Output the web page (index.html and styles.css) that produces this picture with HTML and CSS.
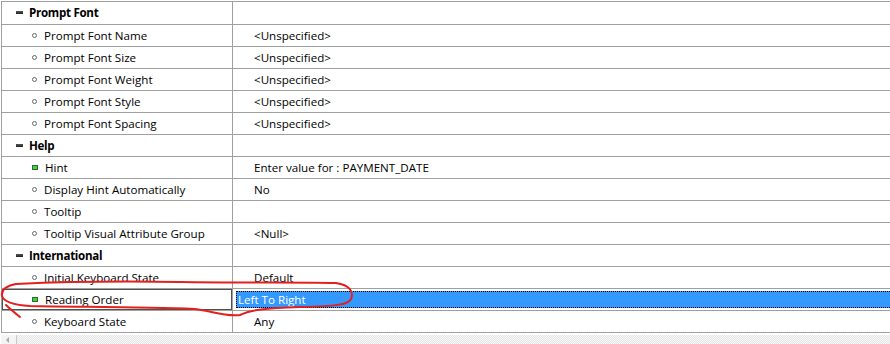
FILE: index.html
```html
<!DOCTYPE html>
<html lang="en">
<head>
    <meta charset="UTF-8">
    <title>Property Palette</title>
    <link rel="stylesheet" href="styles.css">
</head>
<body>

    <div class="palette">
        <div class="grid">
            <div class="row category">
                <div class="name"><span class="collapse"></span>Prompt Font</div>
                <div class="value"></div>
            </div>
            <div class="row">
                <div class="name"><span class="dot"></span>Prompt Font Name</div>
                <div class="value">&lt;Unspecified&gt;</div>
            </div>
            <div class="row">
                <div class="name"><span class="dot"></span>Prompt Font Size</div>
                <div class="value">&lt;Unspecified&gt;</div>
            </div>
            <div class="row">
                <div class="name"><span class="dot"></span>Prompt Font Weight</div>
                <div class="value">&lt;Unspecified&gt;</div>
            </div>
            <div class="row">
                <div class="name"><span class="dot"></span>Prompt Font Style</div>
                <div class="value">&lt;Unspecified&gt;</div>
            </div>
            <div class="row">
                <div class="name"><span class="dot"></span>Prompt Font Spacing</div>
                <div class="value">&lt;Unspecified&gt;</div>
            </div>
            <div class="row category">
                <div class="name"><span class="collapse"></span>Help</div>
                <div class="value"></div>
            </div>
            <div class="row">
                <div class="name"><span class="changed"></span>Hint</div>
                <div class="value">Enter value for : PAYMENT_DATE</div>
            </div>
            <div class="row">
                <div class="name"><span class="dot"></span>Display Hint Automatically</div>
                <div class="value">No</div>
            </div>
            <div class="row">
                <div class="name"><span class="dot"></span>Tooltip</div>
                <div class="value"></div>
            </div>
            <div class="row">
                <div class="name"><span class="dot"></span>Tooltip Visual Attribute Group</div>
                <div class="value">&lt;Null&gt;</div>
            </div>
            <div class="row category">
                <div class="name"><span class="collapse"></span>International</div>
                <div class="value"></div>
            </div>
            <div class="row">
                <div class="name"><span class="dot"></span>Initial Keyboard State</div>
                <div class="value">Default</div>
            </div>
            <div class="row selected">
                <div class="name"><span class="changed"></span>Reading Order</div>
                <div class="value"><span class="edit">Left To Right</span></div>
            </div>
            <div class="row">
                <div class="name"><span class="dot"></span>Keyboard State</div>
                <div class="value">Any</div>
            </div>
        </div>

        <div class="hscroll">
            <div class="arrow-btn"><span class="arrow-left"></span></div>
        </div>

        <!-- red hand-drawn mark around the selected row -->
        <svg class="markup" width="890" height="344" viewBox="0 0 890 344">
            <path d="M16 284 C 60 282, 120 281, 180 282 C 240 283, 300 282, 336 283 C 350 285, 354 292, 351 299 C 348 305, 336 306, 300 307 C 265 308, 250 310, 240 315 C 225 317, 212 311, 195 309 C 140 307, 80 307, 30 306 C 12 305, 4 302, 2 296 C 1 290, 6 286, 16 284"
                  fill="none" stroke="#e3201e" stroke-width="2" stroke-linecap="round"/>
            <path d="M6 305 C 10 309, 15 313, 20 317" fill="none" stroke="#e3201e" stroke-width="2" stroke-linecap="round"/>
        </svg>
    </div>

</body>
</html>
```

FILE: styles.css
```css
body {
    margin: 0;
    padding: 0;
    background-color: #fff;
    font-family: "Open Sans", "Noto Sans", Arial, sans-serif;
    font-size: 11.6px;
    color: #000;
}
.palette {
    position: relative;
    width: 890px;
    height: 344px;
    overflow: hidden;
    padding-top: 1px;
    box-sizing: border-box;
}
.grid {
    border-top: 1px solid #a0a0a0;
    border-left: 1px solid #a0a0a0;
    margin-left: 1px;
}
.row {
    display: flex;
    height: 21px;
    border-bottom: 1px solid #a0a0a0;
}
.row:first-child {
    height: 22px;
}
.name {
    width: 231px;
    flex-shrink: 0;
    display: flex;
    align-items: center;
    padding-left: 30px;
    padding-bottom: 1px;
    box-sizing: border-box;
    border-right: 1px solid #a0a0a0;
    white-space: nowrap;
}
.value {
    flex: 1;
    display: flex;
    align-items: center;
    padding-left: 21px;
    padding-bottom: 1px;
    white-space: nowrap;
}
.category .name {
    padding-left: 14px;
    font-weight: bold;
    letter-spacing: -0.3px;
}
.collapse {
    width: 7px;
    height: 3px;
    margin-right: 6px;
    background: linear-gradient(#555, #222);
}
.dot {
    width: 3px;
    height: 3px;
    border: 1px solid #666;
    border-radius: 50%;
    margin-right: 7px;
}
.changed {
    width: 4px;
    height: 3px;
    border: 1px solid #2e6b2e;
    background: #3fd23f;
    margin-right: 7px;
}
.selected .name {
    box-shadow: inset 0 0 0 1px #505050;
}
.selected .value {
    padding-left: 3px;
    padding-bottom: 0;
}
.edit {
    display: flex;
    align-items: center;
    width: 100%;
    height: 17px;
    padding-left: 1px;
    padding-bottom: 1px;
    box-sizing: border-box;
    background: #3399ff;
    color: #fff;
    border-top: 1px dotted #000;
    border-bottom: 1px dotted #000;
    border-left: 1px dotted #000;
}
.hscroll {
    height: 10px;
    margin-top: 2px;
    margin-left: 1px;
    background-color: #f2f2f2;
    background-image: repeating-conic-gradient(#e6e6e6 0 25%, #f7f7f7 0 50%);
    background-size: 2px 2px;
    display: flex;
}
.arrow-btn {
    width: 16px;
    border-right: 1px solid #c8c8c8;
    background: #f4f4f4;
    display: flex;
    align-items: center;
    padding-left: 5px;
    box-sizing: border-box;
}
.arrow-left {
    width: 0;
    height: 0;
    border-top: 3px solid transparent;
    border-bottom: 3px solid transparent;
    border-right: 3px solid #a8a8a8;
}
.markup {
    position: absolute;
    left: 0;
    top: 0;
    pointer-events: none;
}
```
